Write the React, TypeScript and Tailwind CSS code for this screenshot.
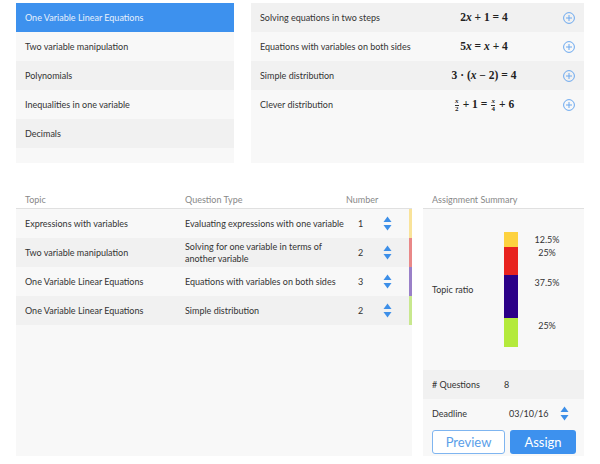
import React from "react";

const Plus = () => (
  <svg width="12" height="12" viewBox="0 0 12 12" fill="none">
    <circle cx="6" cy="6" r="5.4" stroke="#6aa8ef" strokeWidth="1" />
    <path d="M6 3v6M3 6h6" stroke="#6aa8ef" strokeWidth="1" />
  </svg>
);

const Spinner = () => (
  <svg width="9" height="15" viewBox="0 0 9 15">
    <path d="M4.5 0.5L8.5 6H0.5Z" fill="#3d8fe8" />
    <path d="M4.5 14.5L8.5 9H0.5Z" fill="#3d8fe8" />
  </svg>
);

const Frac = ({ n, d }: { n: string; d: string }) => (
  <span className="inline-flex flex-col items-center align-middle leading-none text-[7px] mx-[1px]">
    <span className="italic">{n}</span>
    <span className="border-t border-[#333] w-[4px]" />
    <span>{d}</span>
  </span>
);

const mathCls = "font-['Liberation_Serif',serif] font-bold text-[11.5px] text-[#222] whitespace-nowrap";
const X = () => <span className="italic">x</span>;

const leftItems = [
  "One Variable Linear Equations",
  "Two variable manipulation",
  "Polynomials",
  "Inequalities in one variable",
  "Decimals",
];

const rightItems: { t: string; m: React.ReactNode }[] = [
  { t: "Solving equations in two steps", m: <>2<X /> + 1 = 4</> },
  { t: "Equations with variables on both sides", m: <>5<X /> = <X /> + 4</> },
  { t: "Simple distribution", m: <>3 · (<X /> − 2) = 4</> },
  { t: "Clever distribution", m: <><Frac n="x" d="2" /> + 1 = <Frac n="x" d="4" /> + 6</> },
];

const tableRows = [
  { topic: "Expressions with variables", type: "Evaluating expressions with one variable", n: "1", c: "bg-[#f9e39a]" },
  { topic: "Two variable manipulation", type: "Solving for one variable in terms of another variable", n: "2", c: "bg-[#e98888]" },
  { topic: "One Variable Linear Equations", type: "Equations with variables on both sides", n: "3", c: "bg-[#9a80c8]" },
  { topic: "One Variable Linear Equations", type: "Simple distribution", n: "2", c: "bg-[#c8e88e]" },
];

export default function App() {
  return (
    <div className="w-[600px] h-[464px] bg-white font-['Lato','Noto_Sans',sans-serif] text-[9px] text-[#333] overflow-hidden">
      <div className="flex pt-[3px] pl-[16px] gap-[17px]">
        <div className="w-[218px] h-[160px] bg-[#f8f8f8] flex flex-col">
          {leftItems.map((t, i) => (
            <div
              key={t}
              className={`h-[29px] flex items-center pl-[9px] ${
                i === 0 ? "bg-[#3d91ee] text-[#e6f0fc]" : i % 2 === 0 ? "bg-[#f1f1f1]" : "bg-[#f8f8f8]"
              }`}
            >
              {t}
            </div>
          ))}
        </div>
        <div className="w-[333px] h-[160px] bg-[#f8f8f8] flex flex-col">
          {rightItems.map((r, i) => (
            <div
              key={r.t}
              className={`h-[29px] flex items-center pl-[9px] ${i % 2 === 0 ? "bg-[#f1f1f1]" : "bg-[#f8f8f8]"}`}
            >
              <div className="w-[175px]">{r.t}</div>
              <div className={`w-[98px] text-center ${mathCls}`}>{r.m}</div>
              <div className="ml-[30px] flex items-center">
                <Plus />
              </div>
            </div>
          ))}
        </div>
      </div>

      <div className="flex mt-[27px] pl-[16px] gap-[11px]">
        <div className="w-[396px] flex flex-col">
          <div className="h-[19px] flex items-center border-b border-[#e0e0e0] text-[#888] pt-[1px]">
            <div className="w-[169px] pl-[9px]">Topic</div>
            <div className="w-[161px]">Question Type</div>
            <div>Number</div>
          </div>
          <div className="h-[247px] bg-[#f8f8f8]">
            {tableRows.map((r, i) => (
              <div key={i} className={`h-[29px] flex items-center ${i % 2 === 1 ? "bg-[#f1f1f1]" : "bg-[#f8f8f8]"}`}>
                <div className="w-[169px] pl-[9px]">{r.topic}</div>
                <div className="w-[161px] leading-[12px]">{r.type}</div>
                <div className="w-[37px] pl-[12px]">{r.n}</div>
                <div className="flex-1 flex items-center">
                  <Spinner />
                </div>
                <div className={`w-[3px] h-full ${r.c}`} />
              </div>
            ))}
          </div>
        </div>

        <div className="w-[161px] flex flex-col">
          <div className="h-[19px] flex items-center border-b border-[#e0e0e0] text-[#888] pl-[9px] pt-[1px]">Assignment Summary</div>
          <div className="h-[161px] bg-[#f8f8f8] flex items-center pl-[9px]">
            <div className="w-[72px]">Topic ratio</div>
            <div className="flex flex-col w-[14px]">
              <div className="h-[15px] bg-[#fdd23f]" />
              <div className="h-[28px] bg-[#e8231f]" />
              <div className="h-[43px] bg-[#2b0087]" />
              <div className="h-[29px] bg-[#b4ea3c]" />
            </div>
            <div className="relative w-[58px] h-[115px] text-[#333]">
              <div className="absolute left-0 right-0 text-center top-[1px]">12.5%</div>
              <div className="absolute left-0 right-0 text-center top-[14px]">25%</div>
              <div className="absolute left-0 right-0 text-center top-[44px]">37.5%</div>
              <div className="absolute left-0 right-0 text-center top-[87px]">25%</div>
            </div>
          </div>
          <div className="h-[29px] bg-[#f1f1f1] flex items-center pl-[9px]">
            <div className="w-[72px]"># Questions</div>
            <div>8</div>
          </div>
          <div className="h-[29px] bg-[#f8f8f8] flex items-center pl-[9px]">
            <div className="w-[77px]">Deadline</div>
            <div className="w-[51px]">03/10/16</div>
            <Spinner />
          </div>
          <div className="h-[28px] bg-[#f8f8f8] flex items-start pl-[9px] pt-[2px] gap-[5px]">
            <button className="w-[73px] h-[24px] border border-[#7fb5f0] rounded-[3px] bg-white text-[#5a9ee9] text-[13px] leading-none">
              Preview
            </button>
            <button className="w-[66px] h-[24px] rounded-[3px] bg-[#3d91ee] text-white text-[13px] leading-none">
              Assign
            </button>
          </div>
        </div>
      </div>
    </div>
  );
}
